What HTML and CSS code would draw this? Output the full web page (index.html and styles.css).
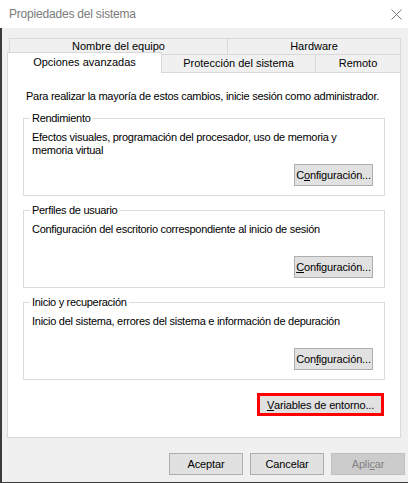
FILE: index.html
```html
<!DOCTYPE html>
<html lang="es">
<head>
<meta charset="utf-8">
<title>Propiedades del sistema</title>
<link rel="stylesheet" href="styles.css">
</head>
<body>
<div class="window">
  <div class="titlebar">
    <span class="title">Propiedades del sistema</span>
    <svg class="close" viewBox="0 0 11 11" width="11" height="11"><path d="M0.5 0.5 L10.5 10.5 M10.5 0.5 L0.5 10.5" stroke="#7a7a7a" stroke-width="1" fill="none"/></svg>
  </div>
  <div class="main">
    <div class="tabs">
      <div class="tabrow back">
        <div class="tab t-nombre">Nombre del equipo</div>
        <div class="tab t-hw last">Hardware</div>
      </div>
      <div class="tabrow front">
        <div class="tab sel">Opciones avanzadas</div>
        <div class="tab t-prot">Protección del sistema</div>
        <div class="tab t-rem last">Remoto</div>
      </div>
    </div>
    <div class="panel">
      <p class="intro">Para realizar la mayoría de estos cambios, inicie sesión como administrador.</p>
      <fieldset class="group">
        <legend>Rendimiento</legend>
        <p class="gtext">Efectos visuales, programación del procesador, uso de memoria y memoria virtual</p>
        <div class="brow"><button class="btn cfg" type="button">C<u>o</u>nfiguración...</button></div>
      </fieldset>
      <fieldset class="group">
        <legend>Perfiles de usuario</legend>
        <p class="gtext">Configuración del escritorio correspondiente al inicio de sesión</p>
        <div class="brow"><button class="btn cfg" type="button"><u>C</u>onfiguración...</button></div>
      </fieldset>
      <fieldset class="group">
        <legend>Inicio y recuperación</legend>
        <p class="gtext">Inicio del sistema, errores del sistema e información de depuración</p>
        <div class="brow"><button class="btn cfg" type="button">Con<u>f</u>iguración...</button></div>
      </fieldset>
      <div class="brow envrow"><button class="btn env" type="button"><u>V</u>ariables de entorno...</button></div>
    </div>
    <div class="footer">
      <button class="btn foot" type="button">Aceptar</button>
      <button class="btn foot" type="button">Cancelar</button>
      <button class="btn foot disabled" type="button">Apli<u>c</u>ar</button>
    </div>
  </div>
</div>
</body>
</html>
```
FILE: styles.css
```css
* { box-sizing: border-box; }
html, body { margin: 0; padding: 0; }
body {
  width: 408px;
  height: 483px;
  overflow: hidden;
  background: #f0f0f0;
  font-family: "Liberation Sans", Arial, sans-serif;
  font-size: 11px;
  color: #000;
}
.window {
  width: 408px;
  height: 483px;
  display: flex;
  flex-direction: column;
}
.titlebar {
  flex: none;
  height: 28px;
  background: #fff;
  display: flex;
  align-items: center;
  justify-content: space-between;
  padding: 0 6px 0 9px;
}
.title {
  font-size: 12px;
  letter-spacing: -0.2px;
  color: #7a7a7a;
}
.close { display: block; }
.main {
  flex: 1;
  border-left: 2px solid #3c3c3c;
  border-bottom: 1px solid #3c3c3c;
  padding: 10px 3px 0 5px;
  display: flex;
  flex-direction: column;
}
.tabs { margin-right: 4px; flex: none; }
.tabrow { display: flex; }
.tab {
  border: 1px solid #d9d9d9;
  border-bottom: none;
  border-right: none;
  background: #f0f0f0;
  text-align: center;
  white-space: nowrap;
}
.tab.last { border-right: 1px solid #d9d9d9; }
.back { height: 16px; margin-left: 2px; }
.back .tab { height: 16px; line-height: 15px; }
.t-nombre { width: 218px; }
.t-hw { flex: 1; }
.front { height: 18px; }
.front .tab { height: 18px; line-height: 17px; }
.front .tab.sel {
  width: 155px;
  height: 21px;
  margin-top: -2px;
  line-height: 19px;
  background: #fff;
  border-right: 1px solid #d9d9d9;
  position: relative;
  z-index: 1;
}
.t-prot { width: 153px; border-left: none !important; }
.t-rem { flex: 1; }
.panel {
  flex: none;
  height: 366px;
  margin-right: 4px;
  background: #fff;
  border: 1px solid #d9d9d9;
  padding: 17px 15px 0;
}
.intro {
  margin: 0;
  padding-left: 3px;
  line-height: 13px;
  letter-spacing: -0.27px;
  white-space: nowrap;
}
.group {
  margin: 9px 0 0;
  padding: 6px 11px 9px 8px;
  border: 1px solid #dcdcdc;
  min-width: 0;
}
.group + .group { margin-top: 8px; }
.group legend {
  padding: 0 2px;
  margin-left: -2px;
  line-height: 13px;
  letter-spacing: -0.3px;
}
.gtext {
  margin: 0;
  min-height: 26px;
  line-height: 13px;
  letter-spacing: -0.27px;
  padding-right: 30px;
}
.brow {
  display: flex;
  justify-content: flex-end;
  margin-top: 7px;
}
.btn {
  font-family: "Liberation Sans", Arial, sans-serif;
  font-size: 11px;
  letter-spacing: -0.15px;
  color: #000;
  height: 22px;
  padding: 0;
  background: #e1e1e1;
  border: 1px solid #adadad;
  border-radius: 0;
  display: flex;
  align-items: center;
  justify-content: center;
  white-space: nowrap;
}
.cfg { width: 79px; }
.envrow { margin-top: 13px; margin-right: 1px; }
.env {
  width: 127px;
  height: 23px;
  border: 3px solid #ff0000;
}
.footer {
  display: flex;
  justify-content: flex-end;
  gap: 7px;
  margin-top: 15px;
}
.foot { width: 74px; }
.disabled {
  background: #cccccc;
  border-color: #bfbfbf;
  color: #838383;
}
```
